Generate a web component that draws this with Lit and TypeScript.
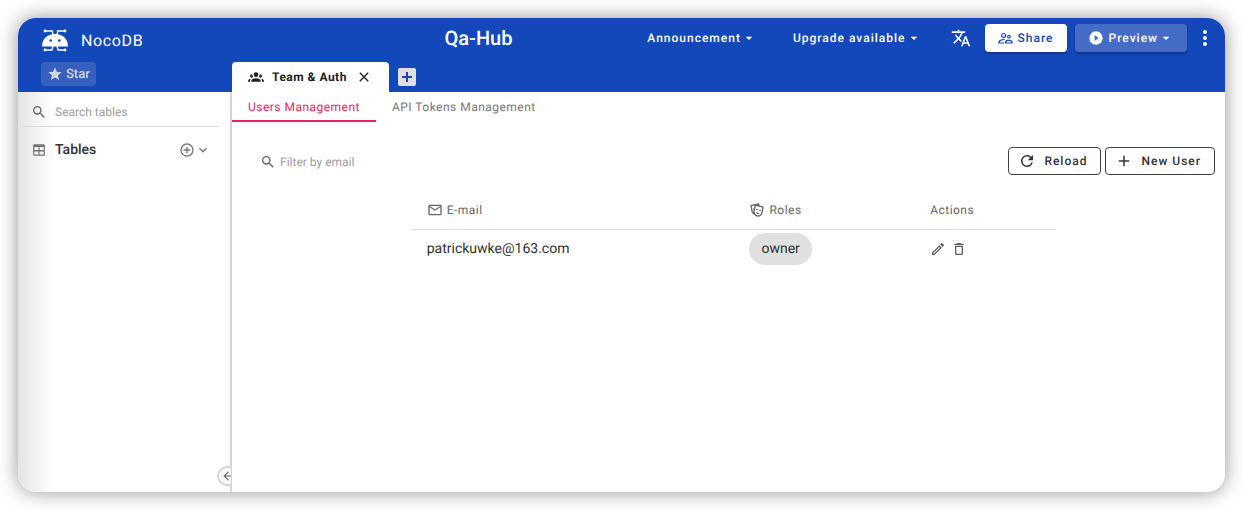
import { LitElement, html, css, svg } from "lit";
import { customElement, property, state } from "lit/decorators.js";
import { classMap } from "lit/directives/class-map.js";

const ICONS: Record<string, string> = {
  star: "M12,17.27L18.18,21L16.54,13.97L22,9.24L14.81,8.62L12,2L9.19,8.62L2,9.24L7.45,13.97L5.82,21L12,17.27Z",
  magnify: "M9.5,3A6.5,6.5 0 0,1 16,9.5C16,11.11 15.41,12.59 14.44,13.73L14.71,14H15.5L20.5,19L19,20.5L14,15.5V14.71L13.73,14.44C12.59,15.41 11.11,16 9.5,16A6.5,6.5 0 0,1 3,9.5A6.5,6.5 0 0,1 9.5,3M9.5,5C7,5 5,7 5,9.5C5,12 7,14 9.5,14C12,14 14,12 14,9.5C14,7 12,5 9.5,5Z",
  table: "M4,2H20A2,2 0 0,1 22,4V20A2,2 0 0,1 20,22H4A2,2 0 0,1 2,20V4A2,2 0 0,1 4,2M4,7V12H11V7H4M13,7V12H20V7H13M4,14.5V19.5H11V14.5H4M13,14.5V19.5H20V14.5H13Z",
  plusCircle: "M12,20C7.59,20 4,16.41 4,12C4,7.59 7.59,4 12,4C16.41,4 20,7.59 20,12C20,16.41 16.41,20 12,20M12,2A10,10 0 0,0 2,12A10,10 0 0,0 12,22A10,10 0 0,0 22,12A10,10 0 0,0 12,2M13,7H11V11H7V13H11V17H13V13H17V11H13V7Z",
  chevronDown: "M7.41,8.58L12,13.17L16.59,8.58L18,10L12,16L6,10L7.41,8.58Z",
  arrowLeft: "M20,11V13H8L13.5,18.5L12.08,19.92L4.16,12L12.08,4.08L13.5,5.5L8,11H20Z",
  group: "M12,5A3.5,3.5 0 0,0 8.5,8.5A3.5,3.5 0 0,0 12,12A3.5,3.5 0 0,0 15.5,8.5A3.5,3.5 0 0,0 12,5M5.5,8A2.5,2.5 0 0,0 3,10.5C3,11.44 3.53,12.25 4.29,12.68C4.65,12.88 5.06,13 5.5,13C5.94,13 6.35,12.88 6.71,12.68C7.08,12.47 7.39,12.17 7.62,11.81C6.89,10.86 6.5,9.7 6.5,8.5C6.5,8.41 6.5,8.31 6.5,8.22C6.2,8.08 5.86,8 5.5,8M18.5,8C18.14,8 17.8,8.08 17.5,8.22C17.5,8.31 17.5,8.41 17.5,8.5C17.5,9.7 17.11,10.86 16.38,11.81C16.61,12.17 16.92,12.47 17.29,12.68C17.65,12.88 18.06,13 18.5,13C18.94,13 19.35,12.88 19.71,12.68C20.47,12.25 21,11.44 21,10.5A2.5,2.5 0 0,0 18.5,8M12,14C9.66,14 5,15.17 5,17.5V19H19V17.5C19,15.17 14.34,14 12,14M4.71,14.55C2.78,14.78 0,15.76 0,17.5V19H3V17.07C3,16.06 3.69,15.22 4.71,14.55M19.29,14.55C20.31,15.22 21,16.06 21,17.07V19H24V17.5C24,15.76 21.22,14.78 19.29,14.55Z",
  close: "M19,6.41L17.59,5L12,10.59L6.41,5L5,6.41L10.59,12L5,17.59L6.41,19L12,13.41L17.59,19L19,17.59L13.41,12L19,6.41Z",
  plusBox: "M17,13H13V17H11V13H7V11H11V7H13V11H17M19,3H5C3.89,3 3,3.89 3,5V19A2,2 0 0,0 5,21H19A2,2 0 0,0 21,19V5C21,3.89 20.1,3 19,3Z",
  menuDown: "M7,10L12,15L17,10H7Z",
  translate: "M12.87,15.07L10.33,12.56L10.36,12.53C12.1,10.59 13.34,8.36 14.07,6H17V4H10V2H8V4H1V6H12.17C11.5,7.92 10.44,9.75 9,11.35C8.07,10.32 7.3,9.19 6.69,8H4.69C5.42,9.63 6.42,11.17 7.67,12.56L2.58,17.58L4,19L9,14L12.11,17.11L12.87,15.07M18.5,10H16.5L12,22H14L15.12,19H19.87L21,22H23L18.5,10M15.88,17L17.5,12.67L19.12,17H15.88Z",
  share: "M17.5,12A3,3 0 1,0 17.5,6A3,3 0 1,0 17.5,12M17.5,7.8A1.2,1.2 0 1,1 17.5,10.2A1.2,1.2 0 1,1 17.5,7.8M9,11A4,4 0 1,0 9,3A4,4 0 1,0 9,11M9,4.8A2.2,2.2 0 1,1 9,9.2A2.2,2.2 0 1,1 9,4.8M17,14C14.67,14 11,15 11,17.5V20H23.5V17.5C23.5,15 19.33,14 17,14M13,18.2C13.6,16.5 15.7,15.8 17,15.8S21,16.5 21.7,18.2ZM11.2,12.9C10.4,12.8 9.6,12.7 9,12.7C6.2,12.7 0.5,14.2 0.5,17.5V20H9.5V18.2H2.5C3.2,16 6.7,14.5 9,14.5L10,14.6C10.4,13.9 10.8,13.3 11.2,12.9Z",
  play: "M10,16.5V7.5L16,12M12,2A10,10 0 0,0 2,12A10,10 0 0,0 12,22A10,10 0 0,0 22,12A10,10 0 0,0 12,2Z",
  dots: "M12,16A2,2 0 0,1 14,18A2,2 0 0,1 12,20A2,2 0 0,1 10,18A2,2 0 0,1 12,16M12,10A2,2 0 0,1 14,12A2,2 0 0,1 12,14A2,2 0 0,1 10,12A2,2 0 0,1 12,10M12,4A2,2 0 0,1 14,6A2,2 0 0,1 12,8A2,2 0 0,1 10,6A2,2 0 0,1 12,4Z",
  reload: "M17.65,6.35C16.2,4.9 14.21,4 12,4A8,8 0 0,0 4,12A8,8 0 0,0 12,20C15.73,20 18.84,17.45 19.73,14H17.65C16.83,16.33 14.61,18 12,18A6,6 0 0,1 6,12A6,6 0 0,1 12,6C13.66,6 15.14,6.69 16.22,7.78L13,11H20V4L17.65,6.35Z",
  plus: "M19,13H13V19H11V13H5V11H11V5H13V11H19V13Z",
  email: "M22,6C22,4.9 21.1,4 20,4H4C2.9,4 2,4.9 2,6V18C2,19.1 2.9,20 4,20H20C21.1,20 22,19.1 22,18V6M20,6L12,11L4,6H20M20,18H4V8L12,13L20,8V18Z",
  masks: "M8.11,19.45C5.94,18.65 4.22,16.78 3.71,14.35L2.05,6.54C1.81,5.46 2.5,4.4 3.58,4.17L13.35,2.1L13.38,2.09C14.45,1.88 15.5,2.57 15.72,3.63L16.07,5.3L20.42,6.23H20.45C21.5,6.47 22.18,7.53 21.96,8.59L20.3,16.41C19.5,20.18 15.78,22.6 12,21.79C10.42,21.46 9.08,20.61 8.11,19.45M20,8.18L10.23,6.1L8.57,13.92V13.95C8,16.63 9.73,19.27 12.42,19.84C15.11,20.41 17.77,18.69 18.34,16L20,8.18M16,16.5C15.37,17.57 14.11,18.16 12.83,17.89C11.56,17.62 10.65,16.57 10.5,15.34L16,16.5M8.47,5.17L4,6.13L5.66,13.94L5.67,13.97C5.82,14.68 6.12,15.32 6.53,15.87C6.43,15.1 6.45,14.3 6.62,13.5L7.05,11.5C6.6,11.42 6.21,11.17 6,10.81C6.06,10.2 6.56,9.66 7.25,9.5C7.33,9.5 7.4,9.5 7.5,9.5L8.28,5.69C8.32,5.5 8.38,5.33 8.47,5.17M15.03,12.23C15.35,11.7 16.03,11.42 16.72,11.57C17.41,11.71 17.91,12.24 18,12.86C17.67,13.38 17,13.66 16.3,13.5C15.61,13.37 15.11,12.84 15.03,12.23M10.15,11.19C10.47,10.66 11.14,10.38 11.83,10.53C12.5,10.67 13.03,11.21 13.11,11.82C12.78,12.34 12.11,12.63 11.42,12.5C10.73,12.33 10.23,11.8 10.15,11.19Z",
  pencil: "M14.06,9L15,9.94L5.92,19H5V18.08L14.06,9M17.66,3C17.41,3 17.15,3.1 16.96,3.29L15.13,5.12L18.88,8.87L20.71,7.04C21.1,6.65 21.1,6 20.71,5.63L18.37,3.29C18.17,3.09 17.92,3 17.66,3M14.06,6.19L3,17.25V21H6.75L17.81,9.94L14.06,6.19Z",
  trash: "M6,19A2,2 0 0,0 8,21H16A2,2 0 0,0 18,19V7H6V19M8,9H16V19H8V9M15.5,4L14.5,3H9.5L8.5,4H5V6H19V4H15.5Z",
};

@customElement("app-icon")
export class AppIcon extends LitElement {
  @property() name = "";
  @property({ type: Number }) size = 16;

  static styles = css`
    :host { display: inline-flex; flex: none; }
    svg { display: block; fill: currentColor; fill-rule: evenodd; }
  `;

  render() {
    return html`<svg width=${this.size} height=${this.size} viewBox="0 0 24 24" aria-hidden="true">
      ${svg`<path d=${ICONS[this.name] ?? ""}></path>`}
    </svg>`;
  }
}

@customElement("app-root")
export class AppRoot extends LitElement {
  @state() private section = 0;

  private sections = ["Users Management", "API Tokens Management"];
  private users = [{ email: "patrickuwke@163.com", role: "owner" }];

  static styles = css`
    :host {
      display: block;
      box-sizing: border-box;
      min-height: 100vh;
      padding: 18px;
      background: #fff;
      font-family: Roboto, "Noto Sans", sans-serif;
      font-size: 14px;
      color: #333;
      text-rendering: geometricPrecision;
    }
    * { box-sizing: border-box; }
    button, input { font: inherit; color: inherit; margin: 0; text-rendering: inherit; }
    button { padding: 0; border: 0; background: none; display: inline-flex; align-items: center; cursor: pointer; letter-spacing: inherit; white-space: nowrap; }
    a { color: inherit; text-decoration: none; }
    h1 { margin: 0; font-size: 20px; line-height: 24px; font-weight: 500; }

    .window {
      display: flex;
      flex-direction: column;
      min-height: calc(100vh - 36px);
      border-radius: 18px;
      overflow: hidden;
      background: #fff;
      box-shadow: 0 0 20px rgba(0, 0, 0, 0.42);
    }
    .header { background: #1348ba; color: #fff; }
    .bar {
      display: grid;
      grid-template-columns: 4fr auto 7fr;
      align-items: center;
      height: 40px;
      padding: 0 8px 0 24px;
    }
    .brand { display: flex; align-items: center; gap: 13px; font-size: 16px; letter-spacing: 0.04em; padding-top: 4px; }
    .logo { display: block; }
    .actions { display: flex; align-items: center; justify-content: flex-end; font-size: 12px; font-weight: 500; letter-spacing: 1px; }
    .drop { margin-right: 36px; }
    .upgrade { margin-right: 29px; }
    .lang { margin-right: 14px; }
    .share, .preview { height: 28px; padding: 0 13px; border-radius: 4px; box-shadow: 0 2px 2px rgba(0, 0, 0, 0.25); }
    .share { gap: 5px; background: #fff; color: #1348ba; margin-right: 8px; }
    .preview { background: #456dc8; margin-right: 6px; }
    .preview span { margin-left: 5px; }
    .strip { display: flex; align-items: flex-end; height: 34px; }
    .starbox { width: 214px; height: 34px; padding: 4px 23px; flex: none; }
    .star { height: 24px; padding: 0 6px; gap: 3px; border-radius: 4px; background: #365fc0; color: #d3d5da; font-size: 13px; font-weight: 500; }
    .tab { display: flex; align-items: center; height: 30px; padding: 0 17px 0 16px; background: #fff; color: #222; border-radius: 4px 4px 0 0; font-size: 12px; font-weight: 700; letter-spacing: 0.04em; }
    .tab .close { margin-left: 9px; }
    .tabname { margin-left: 8px; }
    .add { margin: 0 6px 3px; color: #e0e0e0; }

    .body { display: flex; flex: 1; }
    .side {
      position: relative;
      flex: none;
      width: 214px;
      padding-left: 5px;
      border-right: 2px solid #d4d4d4;
      background: linear-gradient(to right, #e4e4e4, #fff 36px);
    }
    .search { display: flex; align-items: center; gap: 8px; height: 35px; margin-right: 12px; padding: 5px 8px 0; border-bottom: 1px solid #dcdcdc; color: #666; }
    input { min-width: 0; border: 0; outline: 0; background: none; padding: 0; font-size: 12px; }
    input::placeholder { color: #9e9e9e; opacity: 1; }
    .search input { flex: 1; }
    .tables { display: flex; align-items: center; height: 46px; padding: 0 19px 0 9px; color: #757575; }
    .tables strong { flex: 1; margin-left: 9px; font-size: 14px; font-weight: 500; color: #333; }
    .fold {
      position: absolute;
      right: -1px;
      bottom: 6px;
      width: 14px;
      height: 20px;
      padding-left: 2px;
      overflow: hidden;
      border: 2px solid #d4d4d4;
      border-right: 0;
      border-radius: 10px 0 0 10px;
      background: #f5f5f5;
      color: #666a76;
    }
    .main { flex: 1; min-width: 0; }
    .sections { display: flex; height: 30px; }
    .section { padding: 2px 16px 0; border-bottom: 2px solid transparent; color: #777; font-size: 12px; letter-spacing: 0.04em; }
    .section.on { color: #e91e63; border-color: #e91e63; }
    .tools { display: flex; align-items: center; gap: 4px; padding: 25px 10px 0 28px; }
    .filter { display: flex; align-items: center; gap: 4px; flex: 1; padding-top: 2px; color: #666; }
    .outlined { height: 28px; padding: 0 13px 0 9px; gap: 8px; border: 1px solid #424242; border-radius: 4px; font-size: 12px; font-weight: 500; letter-spacing: 1px; }
    table { width: 65%; margin: 16px 0 0 18%; border-collapse: collapse; table-layout: fixed; }
    th, td { height: 38px; padding: 0 16px; text-align: left; }
    td { height: 40px; }
    th { font-weight: 400; font-size: 12px; color: #666; border-bottom: 1px solid #dcdcdc; letter-spacing: 0.04em; }
    .th { display: flex; align-items: center; gap: 4px; }
    .email { width: 50%; }
    .roles { width: 28%; }
    .chip { display: inline-flex; align-items: center; height: 32px; padding: 0 12px; border-radius: 16px; background: #e0e0e0; vertical-align: middle; }
    .row-actions { display: flex; gap: 5px; color: #616161; }
  `;

  render() {
    return html`
      <div class="window">
        <header class="header">
          <div class="bar">
            <a class="brand" href="#">
              <svg class="logo" width="26" height="23" viewBox="0 0 26 23" aria-hidden="true">
                <path fill="#fff" d="M0 17.5C0 10 5 5 13 5S26 10 26 17.5Z"></path>
                <path fill="none" stroke="#fff" stroke-width="1.3" d="M3 2H10.5V4L11.5 6M23 2H15.5V4L14.5 6M3 21H10L11 17M23 21H16L15 17"></path>
                <g fill="#fff"><circle cx="3" cy="2" r="1.4"></circle><circle cx="23" cy="2" r="1.4"></circle><circle cx="3" cy="21" r="1.4"></circle><circle cx="23" cy="21" r="1.4"></circle></g>
                <g fill="#1348ba"><circle cx="8.7" cy="11.5" r="1.3"></circle><circle cx="17.3" cy="11.5" r="1.3"></circle></g>
              </svg>
              <span>NocoDB</span>
            </a>
            <h1>Qa-Hub</h1>
            <div class="actions">
              <button class="drop">Announcement<app-icon name="menuDown" size="16"></app-icon></button>
              <button class="drop upgrade">Upgrade available<app-icon name="menuDown" size="16"></app-icon></button>
              <button class="lang" aria-label="Language"><app-icon name="translate" size="20"></app-icon></button>
              <button class="share"><app-icon name="share" size="15"></app-icon>Share</button>
              <button class="preview"><app-icon name="play" size="16"></app-icon><span>Preview</span><app-icon name="menuDown" size="16"></app-icon></button>
              <button aria-label="More"><app-icon name="dots" size="24"></app-icon></button>
            </div>
          </div>
          <div class="strip">
            <div class="starbox"><button class="star"><app-icon name="star" size="16"></app-icon>Star</button></div>
            <div class="tab">
              <app-icon name="group" size="16"></app-icon>
              <span class="tabname">Team &amp; Auth</span>
              <button class="close" aria-label="Close tab"><app-icon name="close" size="16"></app-icon></button>
            </div>
            <button class="add" aria-label="Add tab"><app-icon name="plusBox" size="24"></app-icon></button>
          </div>
        </header>
        <div class="body">
          <aside class="side">
            <label class="search"><app-icon name="magnify" size="16"></app-icon><input type="text" placeholder="Search tables" aria-label="Search tables" /></label>
            <div class="tables">
              <app-icon name="table" size="14"></app-icon>
              <strong>Tables</strong>
              <button aria-label="Add table"><app-icon name="plusCircle" size="16"></app-icon></button>
              <button aria-label="Expand tables"><app-icon name="chevronDown" size="16"></app-icon></button>
            </div>
            <button class="fold" aria-label="Collapse sidebar"><app-icon name="arrowLeft" size="14"></app-icon></button>
          </aside>
          <main class="main">
            <nav class="sections">
              ${this.sections.map((name, i) => html`<button class=${classMap({ section: true, on: i === this.section })} @click=${() => (this.section = i)}>${name}</button>`)}
            </nav>
            <div class="tools">
              <label class="filter"><app-icon name="magnify" size="16"></app-icon><input type="text" placeholder="Filter by email" aria-label="Filter by email" /></label>
              <button class="outlined"><app-icon name="reload" size="18"></app-icon>Reload</button>
              <button class="outlined"><app-icon name="plus" size="18"></app-icon>New User</button>
            </div>
            <table>
              <thead>
                <tr>
                  <th class="email"><span class="th"><app-icon name="email" size="16"></app-icon>E-mail</span></th>
                  <th class="roles"><span class="th"><app-icon name="masks" size="16"></app-icon>Roles</span></th>
                  <th>Actions</th>
                </tr>
              </thead>
              <tbody>
                ${this.users.map((user) => html`<tr>
                  <td>${user.email}</td>
                  <td><span class="chip">${user.role}</span></td>
                  <td><div class="row-actions">
                    <button aria-label="Edit user"><app-icon name="pencil" size="16"></app-icon></button>
                    <button aria-label="Delete user"><app-icon name="trash" size="16"></app-icon></button>
                  </div></td>
                </tr>`)}
              </tbody>
            </table>
          </main>
        </div>
      </div>
    `;
  }
}
